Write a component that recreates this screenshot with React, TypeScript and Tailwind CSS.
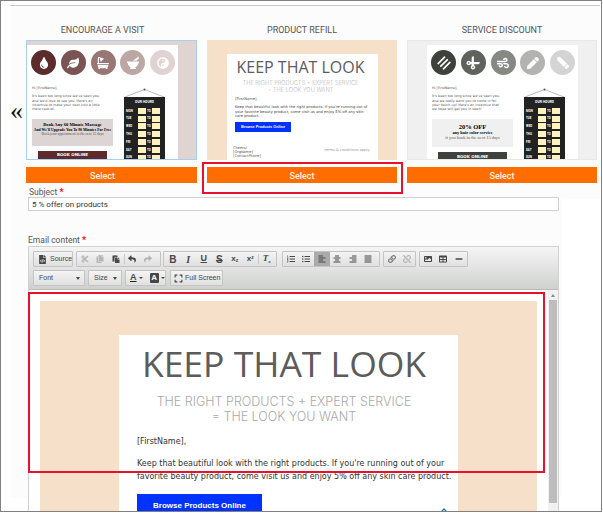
import React from "react";
import {
  FaCut, FaCopy, FaPaste, FaReply, FaShare, FaListOl, FaListUl, FaAlignLeft, FaAlignCenter, FaAlignRight, FaAlignJustify,
  FaLink, FaUnlink, FaImage, FaTable, FaFileCode, FaExpand, FaMinus,
  FaBath, FaLeaf, FaTint, FaMortarPestle, FaYinYang, FaCut as FaScissors, FaWind, FaPen, FaBars,
} from "react-icons/fa";

const Board = () => (
  <div className="w-[41px] shrink-0 flex flex-col items-center mt-[12px]">
    <svg width="41" height="9" viewBox="0 0 41 9" className="block">
      <path d="M1 9 L20.5 1.5 L40 9" fill="none" stroke="#999" strokeWidth="0.7" />
      <circle cx="20.5" cy="1.5" r="1" fill="#555" />
    </svg>
    <div className="w-[41px] bg-[#222] flex flex-col h-[70px] pt-[2px]">
      <div className="text-white text-[3.4px] font-bold text-center h-[7px] leading-[7px] mb-[1px]">OUR HOURS</div>
      {["MON", "TUE", "WED", "THU", "FRI", "SAT", "SUN"].map((d) => (
        <div key={d} className="flex items-center h-[7.8px] pl-[2px] gap-[1px] text-white text-[3px] font-bold">
          <span className="w-[11px]">{d}</span>
          <span className="w-[8px] h-[6px] bg-[#fdf3c0]" />
          <span className="w-[4px] text-center">TO</span>
          <span className="w-[8px] h-[6px] bg-[#fdf3c0]" />
        </div>
      ))}
    </div>
  </div>
);

const Circle = ({ color, icon }: { color: string; icon: React.ReactNode }) => (
  <div className="w-[25px] h-[25px] rounded-full flex items-center justify-center text-white text-[12px]" style={{ backgroundColor: color }}>
    {icon}
  </div>
);

const Visit = () => (
  <div className="w-[171px] h-[120px] bg-[#e0d4d2] border border-[#a9cfee] overflow-hidden pt-[4px]">
    <div className="w-[151px] h-[120px] bg-white">
      <div className="flex justify-between pl-[4px] pr-[3px] pt-[5px]">
        <Circle color="#5c2b2b" icon={<FaTint />} />
        <Circle color="#7a5453" icon={<FaLeaf />} />
        <Circle color="#997674" icon={<FaBath />} />
        <Circle color="#bda7a4" icon={<FaMortarPestle />} />
        <Circle color="#e0d4d2" icon={<FaYinYang />} />
      </div>
      <div className="flex pl-[5px] mt-[1px]">
        <div className="w-[81px] text-[3.4px] leading-[4.3px] text-[#555] pt-[10px] font-['DejaVu_Sans',sans-serif]">
          <p>Hi [FirstName],</p>
          <p className="mt-[4px] whitespace-nowrap">It's been too long since we've seen you,<br />and we'd love to see you. Here's an<br />incentive to make your next visit a little<br />more special.</p>
          <div className="bg-[#ddd5d3] h-[27px] mt-[8px] text-center pt-[4px] font-['Liberation_Serif',serif] text-black leading-[4.4px]">
            <p className="text-[4.6px] font-bold">Book Any 60 Minute Massage</p>
            <p className="text-[3.8px] font-bold">And We'll Upgrade You To 90 Minutes For Free</p>
            <p className="text-[3.6px] text-[#555]">Book your appointment in the next 15 days</p>
          </div>
          <div className="bg-[#5c2b2b] w-[69px] h-[10px] ml-[6px] mt-[5px] text-white text-[4px] font-bold text-center leading-[8px]">BOOK ONLINE</div>
        </div>
        <div className="ml-[11px]"><Board /></div>
      </div>
    </div>
  </div>
);

const Refill = () => (
  <div className="w-[190px] h-[120px] bg-[#f7e0c9] overflow-hidden pt-[14px] pl-[20px]">
    <div className="w-[151px] h-[106px] bg-white px-[8px] overflow-hidden">
      <div className="w-[131px] text-center text-[#5c5c5c] text-[16px] leading-[20px] mt-[3px] font-['Open_Sans',sans-serif] whitespace-nowrap">KEEP THAT LOOK</div>
      <div className="w-[131px] text-center text-[#b5b5b5] text-[5.7px] leading-[6.5px] mt-[3px] font-['Inter',sans-serif] font-light whitespace-nowrap">THE RIGHT PRODUCTS + EXPERT SERVICE<br />= THE LOOK YOU WANT</div>
      <p className="text-[3.7px] leading-[4.4px] text-[#555] mt-[4px] font-['DejaVu_Sans',sans-serif]">[FirstName],</p>
      <p className="text-[3.7px] leading-[4.4px] text-[#444] mt-[4px] font-['DejaVu_Sans',sans-serif]">Keep that beautiful look with the right products. If you're running out of your favorite beauty product, come visit us and enjoy 5% off any skin care product.</p>
      <div className="w-[56px] h-[10px] bg-[#0033ff] mt-[3px] text-white text-[3.8px] font-bold text-center leading-[10px] font-['Liberation_Sans',sans-serif]">Browse Products Online</div>
      <div className="flex justify-between mt-[14px] text-[3.6px] leading-[4.4px] text-[#555] font-['DejaVu_Sans',sans-serif]">
        <p className="-ml-[2px]">Cheers!<br />[OrgName]<br />[ContactPhone]</p>
        <p className="text-[#999] mt-[2px]">terms &amp; conditions apply.</p>
      </div>
    </div>
  </div>
);

const Discount = () => (
  <div className="w-[190px] h-[120px] bg-[#f0f0f0] border border-[#e8e8e8] overflow-hidden pt-[4px] pl-[19px]">
    <div className="w-[151px] h-[120px] bg-white">
      <div className="flex justify-between pl-[4px] pr-[3px] pt-[5px]">
        <Circle color="#3f423c" icon={<FaBars className="-rotate-45" />} />
        <Circle color="#5f625d" icon={<FaScissors className="-rotate-45" />} />
        <Circle color="#868884" icon={<FaWind />} />
        <Circle color="#b3b4b2" icon={<FaPen />} />
        <Circle color="#d4d4d4" icon={<FaPen className="rotate-90" />} />
      </div>
      <div className="flex pl-[5px] mt-[1px]">
        <div className="w-[81px] text-[3.4px] leading-[4.3px] text-[#555] pt-[10px] font-['DejaVu_Sans',sans-serif]">
          <p>Hi [FirstName],</p>
          <p className="mt-[4px] whitespace-nowrap">It's been too long since we've seen you,<br />and we really want you to come in for<br />your touch-up! Here's an incentive that<br />we hope will get you in soon!</p>
          <div className="bg-[#f0f0f0] h-[28px] mt-[8px] text-center pt-[4px] font-['Liberation_Serif',serif] text-black">
            <p className="text-[6.5px] leading-[7px] font-bold">20% OFF</p>
            <p className="text-[4.4px] leading-[5px] font-bold">any hair color service</p>
            <p className="text-[4.4px] leading-[6px] text-[#555]">if you book in the next 15 days</p>
          </div>
          <div className="bg-[#3f423c] w-[69px] h-[10px] ml-[6px] mt-[5px] text-white text-[4px] font-bold text-center leading-[9px]">BOOK ONLINE</div>
        </div>
        <div className="ml-[11px]"><Board /></div>
      </div>
    </div>
  </div>
);

const Card = ({ title, w, offset, children }: { title: string; w: string; offset?: string; children: React.ReactNode }) => (
  <div className={`${w} flex flex-col`}>
    <div className={`h-[34px] flex items-end justify-center pb-[4px] text-[9px] leading-[12px] text-[#555] ${offset ?? ""}`}>{title}</div>
    {children}
    <div className={`mt-[7px] h-[16px] pt-[3px] bg-[#ff6c00] text-[#fff3e8] text-[9px] font-medium flex items-center justify-center ${offset ?? ""}`}>Select</div>
  </div>
);

const Group = ({ children, className = "" }: { children: React.ReactNode; className?: string }) => (
  <div className={`h-[16px] flex items-center border border-[#c4c4c4] rounded-[1px] bg-gradient-to-b from-[#f4f4f4] to-[#e0e0e0] whitespace-nowrap ${className}`}>{children}</div>
);

const Btn = ({ children, active, dim }: { children: React.ReactNode; active?: boolean; dim?: boolean }) => (
  <div className={`w-[15.5px] h-[14px] flex items-center justify-center text-[8px] ${dim ? "text-[#b5b5b5]" : "text-[#474747]"} ${active ? "bg-[#aaaaaa]" : ""}`}>{children}</div>
);

const Sep = () => <div className="w-px h-[10px] bg-[#c9c9c9]" />;

const Toolbar = () => (
  <div className="h-[43px] bg-gradient-to-b from-[#f5f5f5] to-[#cfd1cf] border-t border-[#d1d1d1] pl-[4px] pt-[4px] text-[#474747] font-['Liberation_Sans',sans-serif]">
    <div className="flex gap-[3px]">
      <Group className="w-[40px] pl-[4px] gap-[3px] text-[7px]"><FaFileCode className="text-[9px] shrink-0" /><span>Source</span></Group>
      <Group className="w-[85px]">
        <Btn dim><FaCut /></Btn><Btn dim><FaCopy /></Btn><Btn><FaPaste /></Btn><Sep /><Btn><FaReply /></Btn><Btn dim><FaShare /></Btn>
      </Group>
      <Group className="w-[114px] -ml-[1px] pl-[1px]">
        <Btn><b className="text-[10px]">B</b></Btn><Btn><i className="text-[10px] font-bold font-['Liberation_Serif',serif]">I</i></Btn><Btn><u className="text-[9px] font-bold">U</u></Btn><Btn><s className="text-[10px] font-bold">S</s></Btn>
        <Btn><b className="text-[8px]">x<sub className="text-[5px]">z</sub></b></Btn><Btn><b className="text-[8px]">x<sup className="text-[5px]">z</sup></b></Btn><Sep /><Btn><i className="text-[9px] font-bold font-['Liberation_Serif',serif]">T<sub className="text-[5px]">x</sub></i></Btn>
      </Group>
      <Group className="w-[98px] ml-[2px]">
        <Btn><FaListOl /></Btn><Btn><FaListUl /></Btn><Btn active><FaAlignLeft /></Btn><Btn><FaAlignCenter /></Btn><Btn><FaAlignRight /></Btn><Btn><FaAlignJustify /></Btn>
      </Group>
      <Group className="w-[33px]"><Btn><FaLink className="text-[#777]" /></Btn><Btn dim><FaUnlink /></Btn></Group>
      <Group className="w-[49px]"><Btn><FaImage /></Btn><Btn><FaTable /></Btn><Btn><FaMinus /></Btn></Group>
    </div>
    <div className="flex gap-[3px] mt-[3px] text-[7px]">
      <Group className="w-[52px] pl-[5px] justify-between pr-[4px]"><span>Font</span><span className="w-0 h-0 border-x-[2.5px] border-x-transparent border-t-[3px] border-t-[#474747]" /></Group>
      <Group className="w-[34px] pl-[5px] justify-between pr-[4px]"><span>Size</span><span className="w-0 h-0 border-x-[2.5px] border-x-transparent border-t-[3px] border-t-[#474747]" /></Group>
      <Group className="w-[41px] pl-[4px] gap-[2px]">
        <b className="text-[9px] underline decoration-[#222]">A</b><span className="w-0 h-0 border-x-[2px] border-x-transparent border-t-[2.5px] border-t-[#474747]" />
        <b className="ml-[5px] text-[8px] text-white bg-[#474747] w-[10px] h-[10px] leading-[10px] text-center rounded-[1px]">A</b><span className="w-0 h-0 border-x-[2px] border-x-transparent border-t-[2.5px] border-t-[#474747]" />
      </Group>
      <Group className="w-[53px] ml-[1px] pl-[3px] gap-[2px]"><FaExpand className="text-[9px] shrink-0" /><span>Full Screen</span></Group>
    </div>
  </div>
);

export default function App() {
  return (
    <div className="w-[602px] h-[512px] relative overflow-hidden border border-[#808080] bg-white font-['Roboto',sans-serif]">
      <div className="ml-[9px] w-[590px] mt-[4px] h-[194px] bg-[#fcfcfc] border-t border-[#c8c8c8]">
        <div className="flex">
          <div className="w-[16px] h-[188px] flex items-center justify-center pt-[22px] pr-[3px] text-[26px] leading-none text-[#111] font-['Liberation_Serif',serif]">«</div>
          <div className="flex gap-[10px]">
            <Card title="ENCOURAGE A VISIT" w="w-[171px]" offset="pr-[18px]"><Visit /></Card>
            <Card title="PRODUCT REFILL" w="w-[190px]"><Refill /></Card>
            <Card title="SERVICE DISCOUNT" w="w-[190px]"><Discount /></Card>
          </div>
        </div>
      </div>
      <div className="ml-[9px] w-[552px] h-[313px] -mt-[14px] relative bg-[#fcfcfc] pl-[18px]">
        <div className="h-[12px] leading-[14px] text-[8.5px] text-[#555] ml-[1px]">Subject <span className="text-[#e00] font-bold text-[9px]">*</span></div>
        <div className="w-[531px] h-[14px] border border-[#cfcfcf] bg-white text-[8px] leading-[13px] text-[#333] pl-[3px]">5 % offer on products</div>
        <div className="h-[12px] mt-[22px] leading-[14px] text-[8.5px] text-[#555]">Email content <span className="text-[#e00] font-bold text-[9px]">*</span></div>
        <div className="w-[531px] mt-[1px] border-x border-[#d1d1d1] bg-white">
          <Toolbar />
          <div className="flex h-[240px] border-t border-[#bbb]">
            <div className="flex-1 pl-[11px] pr-[11px] pt-[11px] overflow-hidden">
              <div className="bg-[#f7e0c9] h-[240px] pl-[79px] pt-[34px]">
                <div className="w-[339px] h-[240px] bg-white pl-[18px] relative">
                  <div className="w-[294px] text-center text-[#5c5c5c] text-[35.5px] leading-[46px] pt-[5px] font-['Open_Sans',sans-serif] whitespace-nowrap">KEEP THAT LOOK</div>
                  <div className="w-[294px] text-center text-[#aaaaaa] text-[12.5px] leading-[15px] mt-[8px] font-['Inter',sans-serif] font-light whitespace-nowrap">THE RIGHT PRODUCTS + EXPERT SERVICE<br />= THE LOOK YOU WANT</div>
                  <p className="text-[8px] leading-[12px] text-[#333] mt-[12px] font-['DejaVu_Sans',sans-serif]">[FirstName],</p>
                  <p className="text-[8px] leading-[12.5px] text-[#333] mt-[10px] font-['DejaVu_Sans',sans-serif] whitespace-nowrap">Keep that beautiful look with the right products. If you're running out of your<br />favorite beauty product, come visit us and enjoy 5% off any skin care product.</p>
                  <div className="w-[125px] h-[24px] bg-[#0033ff] mt-[11px] text-white text-[8px] font-bold flex items-center justify-center font-['Liberation_Sans',sans-serif]">Browse Products Online</div>
                  <svg width="10" height="6" viewBox="0 0 10 6" className="absolute left-[320px] top-[173px]"><path d="M1 5 L5 1 L9 5" fill="none" stroke="#1f77b4" strokeWidth="1.3" /></svg>
                </div>
              </div>
            </div>
            <div className="w-[10px] bg-[#f1f1f1] flex flex-col">
              <div className="h-[10px] flex items-center justify-center"><span className="w-0 h-0 border-x-[2.5px] border-x-transparent border-b-[3px] border-b-[#888]" /></div>
              <div className="h-[203px] mx-[1px] bg-[#bdbdbd]" />
            </div>
          </div>
        </div>
      </div>
      <div className="absolute left-[201px] top-[161px] w-[201px] h-[32px] border-2 border-[#e8112d]" />
      <div className="absolute left-[27px] top-[291px] w-[517px] h-[181px] border-2 border-[#e8112d]" />
    </div>
  );
}
